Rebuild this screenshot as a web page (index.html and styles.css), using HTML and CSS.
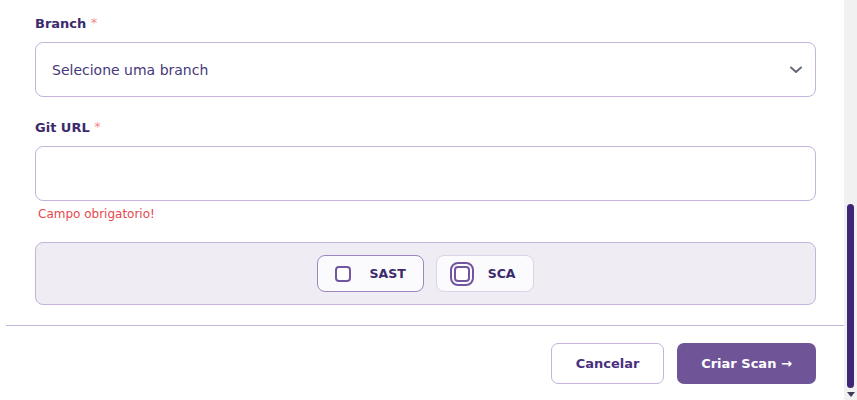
FILE: index.html
```html
<!DOCTYPE html>
<html lang="pt">
<head>
<meta charset="utf-8">
<title>Criar Scan</title>
<link rel="stylesheet" href="styles.css">
</head>
<body>
<div class="app">
  <div class="main">
    <form class="form">
      <label class="label">Branch <span class="req">*</span></label>
      <div class="select">
        <span class="select-text">Selecione uma branch</span>
        <svg class="chevron" width="12" height="8" viewBox="0 0 12 8"><path d="M1 1.5 L6 6 L11 1.5" fill="none" stroke="#6b6b78" stroke-width="2" stroke-linecap="round" stroke-linejoin="round"/></svg>
      </div>
      <label class="label label-gap">Git URL <span class="req">*</span></label>
      <div class="input"></div>
      <div class="error">Campo obrigatorio!</div>
      <div class="options">
        <div class="option option-active"><span class="check"></span><span>SAST</span></div>
        <div class="option"><span class="check check-focus"></span><span>SCA</span></div>
      </div>
    </form>
    <div class="divider"></div>
    <div class="actions">
      <button type="button" class="btn btn-cancel">Cancelar</button>
      <button type="button" class="btn btn-primary">Criar Scan →</button>
    </div>
  </div>
  <div class="scrollbar">
    <div class="thumb"></div>
    <div class="arrow"></div>
  </div>
</div>
</body>
</html>
```

FILE: styles.css
```css
* { box-sizing: border-box; }
html, body { margin: 0; padding: 0; background: #ffffff; }
body { font-family: "DejaVu Sans", "Liberation Sans", sans-serif; }

.app { display: flex; height: 400px; overflow: hidden; }
.main { flex: 1; display: flex; flex-direction: column; }

.form { display: flex; flex-direction: column; padding: 14px 28px 0 35px; }

.label { display: block; height: 20px; font-size: 13px; font-weight: bold; line-height: 20px; color: #3c2a6c; }
.label-gap { margin-top: 21px; }
.req { color: #f28a8a; font-weight: normal; font-size: 13px; line-height: 1; vertical-align: 1px; }

.select, .input {
  margin-top: 8px;
  height: 55px;
  border: 1px solid #c4b4db;
  border-radius: 8px;
  background: #fff;
}
.select { display: flex; align-items: center; justify-content: space-between; padding: 0 13px 0 16px; }
.select-text { font-size: 14px; color: #47387a; }
.chevron { display: block; }

.error { margin-top: 6px; margin-left: 3px; font-size: 12px; line-height: 14px; color: #e5484d; }

.options {
  margin-top: 21px;
  height: 63px;
  border: 1px solid #c4b4db;
  border-radius: 8px;
  background: #efecf3;
  display: flex;
  align-items: center;
  justify-content: center;
  gap: 12px;
}
.option {
  display: flex;
  align-items: center;
  gap: 18px;
  height: 37px;
  padding: 0 17px;
  border: 1px solid #dcd2ea;
  border-radius: 8px;
  background: #fbfafc;
  font-size: 12.5px;
  font-weight: bold;
  color: #3c2a6c;
}
.option-active { border-color: #9c86c2; }
.check {
  width: 16px;
  height: 16px;
  border: 2px solid #7255a0;
  border-radius: 4px;
  background: #fff;
}
.check-focus { outline: 2px solid #7255a0; outline-offset: 2px; }

.divider { margin: 20px 0 0 6px; height: 1px; background: #c4b4db; }

.actions { display: flex; justify-content: flex-end; gap: 13px; padding: 17px 28px 0 0; }
.btn {
  height: 41px;
  border-radius: 7px;
  font-family: "DejaVu Sans", "Liberation Sans", sans-serif;
  font-size: 13px;
  font-weight: bold;
  cursor: pointer;
}
.btn-cancel { width: 113px; border: 1px solid #c4b4db; background: #fff; color: #4a2f7e; }
.btn-primary { width: 139px; border: none; background: #6f5498; color: #fff; }

.scrollbar { width: 13px; background: #f1f1f1; display: flex; flex-direction: column; align-items: center; }
.thumb { margin-top: 204px; width: 7px; height: 184px; border-radius: 4px; background: #3e2875; }
.arrow {
  margin-top: 4px;
  width: 0; height: 0;
  border-left: 4px solid transparent;
  border-right: 4px solid transparent;
  border-top: 5px solid #3f3a55;
}
```
